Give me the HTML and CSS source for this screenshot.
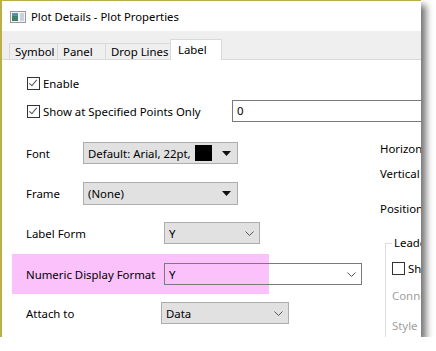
FILE: index.html
```html
<!DOCTYPE html>
<html lang="en">
<head>
  <meta charset="UTF-8" />
  <title>Plot Details - Plot Properties</title>
  <link rel="stylesheet" href="styles.css">
</head>
<body>

  <div class="window">
    <div class="titlebar">
      <svg class="app-icon" width="16" height="12" viewBox="0 0 16 12">
        <rect x="0.5" y="0.5" width="15" height="11" fill="#f4f4f4" stroke="#9a9a9a" />
        <rect x="2" y="2" width="6" height="8" fill="#3f7f6c" />
        <rect x="2" y="2" width="6" height="3" fill="#5a8fb0" />
        <rect x="10" y="2" width="4" height="8" fill="#c9d3dc" />
      </svg>
      <span>Plot Details - Plot Properties</span>
    </div>

    <div class="tabs">
      <div class="tab symbol">Symbol</div>
      <div class="tab panel">Panel</div>
      <div class="tab drop">Drop Lines</div>
      <div class="tab active">Label</div>
    </div>

    <div class="page">
      <div class="check-row">
        <span class="box checked"></span>
        <span>Enable</span>
      </div>

      <div class="check-row points">
        <div class="points-label">
          <span class="box checked"></span>
          <span>Show at Specified Points Only</span>
        </div>
        <div class="textbox">0</div>
      </div>

      <div class="columns">
        <div class="left">
          <div class="field font-row">
            <span class="label short">Font</span>
            <div class="combo flat">
              <span class="value">Default: Arial, 22pt,</span>
              <span class="swatch"></span>
              <svg class="tri" width="9" height="5" viewBox="0 0 9 5"><path d="M0 0h9L4.5 5z" fill="#111" /></svg>
            </div>
          </div>

          <div class="field frame-row">
            <span class="label short">Frame</span>
            <div class="combo flat">
              <span class="value">(None)</span>
              <svg class="tri" width="9" height="5" viewBox="0 0 9 5"><path d="M0 0h9L4.5 5z" fill="#111" /></svg>
            </div>
          </div>

          <div class="field form-row">
            <span class="label long">Label Form</span>
            <div class="combo small">
              <span class="value">Y</span>
              <svg class="chev" width="9" height="5" viewBox="0 0 9 5"><path d="M0.5 0.5l4 4 4-4" fill="none" stroke="#555" /></svg>
            </div>
          </div>

          <div class="field highlight">
            <span class="label long">Numeric Display Format</span>
            <div class="combo open">
              <span class="value">Y</span>
              <svg class="chev" width="9" height="5" viewBox="0 0 9 5"><path d="M0.5 0.5l4 4 4-4" fill="none" stroke="#555" /></svg>
            </div>
          </div>

          <div class="field attach-row">
            <span class="label attach">Attach to</span>
            <div class="combo attach-combo">
              <span class="value">Data</span>
              <svg class="chev" width="9" height="5" viewBox="0 0 9 5"><path d="M0.5 0.5l4 4 4-4" fill="none" stroke="#555" /></svg>
            </div>
          </div>
        </div>

        <div class="right">
          <div class="rtext horiz">Horizontal</div>
          <div class="rtext vert">Vertical</div>
          <div class="rtext pos">Position</div>
          <fieldset class="group">
            <legend>Leader Lines</legend>
            <div class="group-check">
              <span class="box"></span>
              <span>Show</span>
            </div>
            <div class="rtext muted conn">Connect</div>
            <div class="rtext muted style">Style</div>
          </fieldset>
        </div>
      </div>
    </div>
  </div>

</body>
</html>
```

FILE: styles.css
```css
body {
  margin: 0;
  background: #ffffff;
  font-family: "Noto Sans", "Open Sans", sans-serif;
  font-size: 11.4px;
  color: #000;
  white-space: nowrap;
}

.window {
  width: 419px;
  height: 336px;
  border-top: 1px solid #bfae45;
  border-left: 2px solid #bfae45;
  background: #ffffff;
  overflow: hidden;
  box-shadow: 5px 5px 7px rgba(0, 0, 0, 0.55);
}

/* title bar */
.titlebar {
  height: 30px;
  display: flex;
  align-items: center;
  padding-left: 8px;
  gap: 5px;
  font-size: 11.3px;
}

.app-icon {
  margin-top: 2px;
}

/* tabs */
.tabs {
  height: 28px;
  background: #efefef;
  border-bottom: 1px solid #d9d9d9;
  display: flex;
  align-items: flex-end;
  padding-left: 8px;
}

.tab {
  box-sizing: border-box;
  height: 16px;
  line-height: 15px;
  padding-left: 5px;
  border: 1px solid #d9d9d9;
  border-bottom: none;
  margin-left: -1px;
  background: #efefef;
}

.tab.symbol {
  width: 49px;
}

.tab.panel {
  width: 49px;
}

.tab.drop {
  width: 66px;
}

.tab.active {
  width: 52px;
  height: 21px;
  line-height: 19px;
  padding-left: 7px;
  margin-bottom: -1px;
  background: #ffffff;
}

/* page */
.page {
  padding-top: 12px;
}

.check-row {
  height: 22px;
  display: flex;
  align-items: center;
  padding-left: 25px;
  gap: 3px;
}

.check-row.points {
  margin-top: 6px;
}

.points-label {
  width: 202px;
  display: flex;
  align-items: center;
  gap: 3px;
  flex-shrink: 0;
}

.box {
  width: 11px;
  height: 11px;
  border: 1px solid #333;
  display: inline-block;
  position: relative;
  flex-shrink: 0;
}

.box.checked::after {
  content: "";
  position: absolute;
  left: 3px;
  top: 0px;
  width: 3px;
  height: 7px;
  border-right: 1px solid #555;
  border-bottom: 1px solid #555;
  transform: rotate(40deg);
}

.textbox {
  width: 220px;
  height: 20px;
  line-height: 20px;
  border: 1px solid #7a7a7a;
  padding-left: 4px;
  flex-shrink: 0;
}

/* two columns */
.columns {
  display: flex;
  padding-top: 9px;
}

.left {
  width: 368px;
  margin-left: 10px;
  flex-shrink: 0;
}

.field {
  display: flex;
  align-items: center;
  padding-left: 14px;
}

.label {
  flex-shrink: 0;
}

.label.short {
  width: 57px;
}

.label.long {
  width: 138px;
}

.label.attach {
  width: 135px;
}

.combo {
  height: 20px;
  border: 1px solid #adadad;
  background: #e1e1e1;
  display: flex;
  align-items: center;
  padding-left: 4px;
  flex-shrink: 0;
}

.combo .value {
  flex: 1;
}

.combo.flat {
  width: 149px;
}

.swatch {
  width: 17px;
  height: 16px;
  background: #000;
  margin-right: 10px;
}

.tri {
  margin-right: 6px;
}

.chev {
  margin-right: 5px;
}

.font-row {
  margin-top: 11px;
}

.frame-row {
  margin-top: 18px;
  height: 23px;
}

.frame-row .combo {
  height: 21px;
}

.form-row {
  margin-top: 17px;
}

.combo.small {
  width: 90px;
}

.highlight {
  margin-top: 10px;
  width: 243px;
  height: 40px;
  background: #fbc1fb;
}

.combo.open {
  width: 192px;
  background: transparent;
  border-color: #7a7a7a;
}

.attach-row {
  margin-top: 8px;
}

.combo.attach-combo {
  width: 122px;
}

/* right column, cut by the window edge */
.right {
  flex-shrink: 0;
  width: 120px;
}

.rtext {
  line-height: 16px;
}

.horiz {
  margin-top: 10px;
}

.vert {
  margin-top: 9px;
}

.pos {
  margin-top: 19px;
}

.group {
  margin: 18px 0 0 5px;
  padding: 0 0 0 6px;
  border: 1px solid #dcdcdc;
  border-right: none;
  border-bottom: none;
  height: 120px;
}

.group legend {
  padding: 0 2px;
  line-height: 16px;
}

.group-check {
  display: flex;
  align-items: center;
  gap: 3px;
  margin-top: 9px;
  height: 16px;
}

.muted {
  color: #a0a0a0;
}

.conn {
  margin-top: 12px;
}

.style {
  margin-top: 14px;
}
```
